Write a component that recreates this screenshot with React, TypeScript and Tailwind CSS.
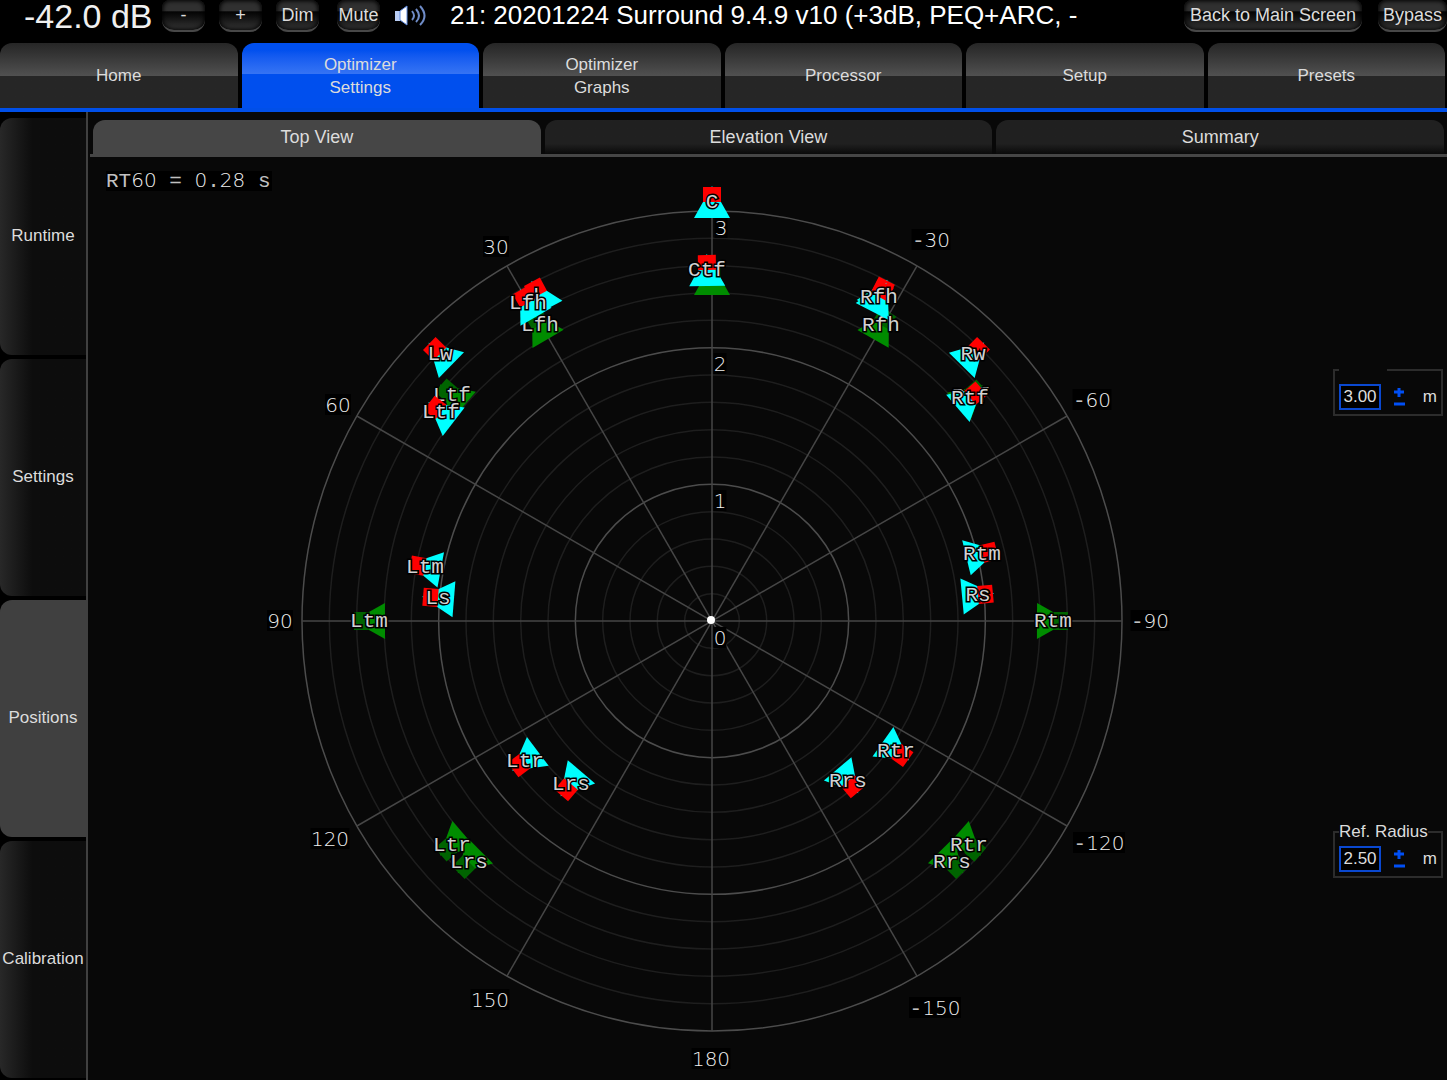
import { useState } from 'react';
import clsx from 'clsx';

const SANS = "font-['Liberation_Sans',Arial,sans-serif]";
const MONO = "font-['Liberation_Mono',monospace]";

const CENTER = { x: 712, y: 620 };
const RADIUS = 410;
const RINGS = 15;

type SpeakerPos = { name: string; x: number; y: number; hideLabel?: boolean };

const TARGETS: SpeakerPos[] = [
  { name: 'Ctf', x: 712, y: 279, hideLabel: true },
  { name: 'Lfh', x: 540, y: 325 },
  { name: 'Rfh', x: 881, y: 325 },
  { name: 'Ltf', x: 452, y: 395 },
  { name: 'Rtf', x: 971, y: 396 },
  { name: 'Ltm', x: 369, y: 621 },
  { name: 'Rtm', x: 1053, y: 621 },
  { name: 'Ltr', x: 452, y: 845 },
  { name: 'Rtr', x: 969, y: 845 },
  { name: 'Lrs', x: 469, y: 862 },
  { name: 'Rrs', x: 952, y: 862 },
];

const MEASURED: SpeakerPos[] = [
  { name: 'L', x: 539, y: 295 },
  { name: 'R', x: 880, y: 294, hideLabel: true },
  { name: 'C', x: 712, y: 202 },
  { name: 'Lw', x: 440, y: 354 },
  { name: 'Rw', x: 973, y: 354 },
  { name: 'Ls', x: 438, y: 598 },
  { name: 'Rs', x: 978, y: 595 },
  { name: 'Lrs', x: 571, y: 784 },
  { name: 'Rrs', x: 848, y: 781 },
  { name: 'Lfh', x: 528, y: 303 },
  { name: 'Ctf', x: 707, y: 270 },
  { name: 'Rfh', x: 879, y: 297 },
  { name: 'Ltf', x: 441, y: 412 },
  { name: 'Rtf', x: 970, y: 398 },
  { name: 'Ltm', x: 425, y: 567 },
  { name: 'Rtm', x: 982, y: 554 },
  { name: 'Ltr', x: 525, y: 761 },
  { name: 'Rtr', x: 896, y: 751 },
];

const SCALE_LABELS = [
  { text: '3', x: 721, y: 228 },
  { text: '2', x: 720, y: 364 },
  { text: '1', x: 720, y: 501 },
  { text: '0', x: 720, y: 638 },
  { text: '30', x: 496, y: 247 },
  { text: '-30', x: 931, y: 240 },
  { text: '60', x: 338, y: 405 },
  { text: '-60', x: 1092, y: 400 },
  { text: '90', x: 280, y: 621 },
  { text: '-90', x: 1150, y: 621 },
  { text: '120', x: 330, y: 839 },
  { text: '-120', x: 1099, y: 843 },
  { text: '150', x: 490, y: 1000 },
  { text: '-150', x: 935, y: 1008 },
  { text: '180', x: 711, y: 1059 },
];

// digits use a face with a plain zero, the rest stays monospaced
function Glyphs({ text }: { text: string }) {
  return (
    <>
      {text.split(/(\d+)/).filter(Boolean).map((part, i) =>
        /\d/.test(part) ? (
          <tspan key={i} fill="#f0f0f0" className="font-['DejaVu_Sans',sans-serif] text-[20px] font-extralight">{part}</tspan>
        ) : (
          <tspan key={i} fill="#c0c0c0">{part}</tspan>
        )
      )}
    </>
  );
}

function ScaleLabel({ text, x, y }: { text: string; x: number; y: number }) {
  const width = text.length * 13;
  return (
    <g>
      <rect x={x - width / 2} y={y - 11} width={width} height={21} fill="#000" />
      <text x={x} y={y + 7} textAnchor="middle" className={clsx(MONO, 'text-[21px]')}>
        <Glyphs text={text} />
      </text>
    </g>
  );
}

function SpeakerShape({ x, y, target }: SpeakerPos & { target?: boolean }) {
  const angle = (Math.atan2(x - CENTER.x, CENTER.y - y) * 180) / Math.PI;
  return (
    <g transform={`translate(${x} ${y}) rotate(${angle})`}>
      <polygon points="0,-16 18,16 -18,16" fill={target ? '#008c00' : '#00ffff'} />
      <rect x={-9} y={-15} width={18} height={15} fill={target ? '#006400' : '#ff0000'} />
    </g>
  );
}

function SpeakerLabel({ name, x, y, hideLabel }: SpeakerPos) {
  if (hideLabel) return null;
  return (
    <text
      x={x}
      y={y + 6}
      textAnchor="middle"
      fill="#d2d2d2"
      stroke="#000"
      strokeWidth={3}
      paintOrder="stroke"
      className={clsx(MONO, 'text-[21px]')}
    >
      {name}
    </text>
  );
}

function PolarPlot() {
  return (
    <svg viewBox="90 157 1243 923" className="min-h-0 min-w-0 flex-1" role="img" aria-label="Speaker positions, top view">
      <g fill="none" strokeWidth={1.5}>
        {Array.from({ length: RINGS }, (_, i) => i + 1).map((n) => (
          <circle
            key={n}
            cx={CENTER.x}
            cy={CENTER.y + 1}
            r={(RADIUS / RINGS) * n}
            stroke={n % 5 === 0 ? '#4c4c4c' : '#1e1e1e'}
          />
        ))}
        {[0, 30, 60, 90, 120, 150].map((deg) => (
          <line
            key={deg}
            x1={CENTER.x}
            x2={CENTER.x}
            y1={CENTER.y + 1 - RADIUS}
            y2={CENTER.y + 1 + RADIUS}
            stroke="#464646"
            transform={`rotate(${deg} ${CENTER.x} ${CENTER.y + 1})`}
          />
        ))}
      </g>
      {SCALE_LABELS.map((l) => (
        <ScaleLabel key={l.text} {...l} />
      ))}
      {TARGETS.map((s) => (
        <SpeakerShape key={s.name} {...s} target />
      ))}
      {TARGETS.map((s) => (
        <SpeakerLabel key={s.name} {...s} />
      ))}
      {MEASURED.map((s) => (
        <g key={s.name}>
          <SpeakerShape {...s} />
          <SpeakerLabel {...s} />
        </g>
      ))}
      <circle cx={711} cy={620} r={4} fill="#fff" />
      <rect x={106} y={171} width={166} height={20} fill="#000" />
      <text x={106} y={187} className={clsx(MONO, 'text-[21px] whitespace-pre')}>
        <Glyphs text="RT60 = 0.28 s" />
      </text>
    </svg>
  );
}

function Spinner({ legend, label, value }: { legend?: string; label: string; value: string }) {
  const [val, setVal] = useState(value);
  const step = (d: number) => setVal((parseFloat(val) + d).toFixed(2));

  return (
    <fieldset aria-label={label} className="h-14 w-[110px] border-2 border-[#2c2c2c] px-1">
      <legend className="h-5 min-w-12 text-[17px] leading-5 whitespace-nowrap">{legend}</legend>
      <div className="flex items-center pt-1">
        <input
          aria-label={label}
          value={val}
          onChange={(e) => setVal(e.target.value)}
          className="h-[26px] w-[42px] border-2 border-[#0a48d0] bg-black text-center text-[17px]"
        />
        <div className="mx-3 flex flex-col gap-[3px] text-[#004ff5]">
          <button aria-label={`Increase ${label}`} onClick={() => step(0.1)}>
            <svg viewBox="0 0 12 12" className="block size-3"><path d="M6 2v9M1 6h10" stroke="currentColor" strokeWidth="3" /></svg>
          </button>
          <button aria-label={`Decrease ${label}`} onClick={() => step(-0.1)}>
            <svg viewBox="0 0 12 8" className="block h-2 w-3"><path d="M1 3h11" stroke="currentColor" strokeWidth="3" /></svg>
          </button>
        </div>
        <span className="ml-auto text-[17px]">m</span>
      </div>
    </fieldset>
  );
}

function BarButton({ children, className }: { children: string; className?: string }) {
  return (
    <button
      className={clsx(
        'h-8 shrink-0 rounded-b-xl rounded-t-lg border-b-2 border-[#484848] bg-linear-to-b from-[#303030] from-35% via-[#050505] via-40% to-[#383838] text-lg leading-none whitespace-nowrap shadow-[inset_0_0_4px_1px_#000]',
        className
      )}
    >
      {children}
    </button>
  );
}

function VolumeIcon() {
  return (
    <svg viewBox="0 0 34 26" className="mr-3 ml-3.5 h-[26px] w-[34px] shrink-0" fill="none">
      <path d="M1 8h5v10H1z" fill="#b9cdf5" />
      <path d="M6 8l7-5v19l-7-5z" fill="#fff" stroke="#5f8be0" />
      <path d="M18 8q4 5 0 9M22 6q6 7 0 13M26 3q9 10 0 19" stroke="#6f8cc8" strokeWidth="2" />
    </svg>
  );
}

const TABS = ['Home', 'Optimizer Settings', 'Optimizer Graphs', 'Processor', 'Setup', 'Presets'];
const SECTIONS = ['Runtime', 'Settings', 'Positions', 'Calibration'];
const VIEWS = ['Top View', 'Elevation View', 'Summary'];

export default function App() {
  const [tab, setTab] = useState('Optimizer Settings');
  const [section, setSection] = useState('Positions');
  const [view, setView] = useState('Top View');

  return (
    <div className={clsx(SANS, 'flex h-screen flex-col overflow-hidden bg-black text-[#dcdcdc]')}>
      <header className="flex h-[43px] shrink-0 items-center pb-[11px] pl-6">
        <span className="w-[138px] shrink-0 text-[34px] leading-[30px] whitespace-nowrap text-[#f0f0f0]">-42.0 dB</span>
        <div className="flex gap-3.5">
          <BarButton className="w-[43px]">-</BarButton>
          <BarButton className="w-[43px]">+</BarButton>
          <BarButton className="w-[43px]">Dim</BarButton>
          <BarButton className="ml-1 w-[43px]">Mute</BarButton>
        </div>
        <VolumeIcon />
        <h1 className="ml-2.5 min-w-0 flex-1 overflow-hidden pb-0.5 text-[26px] leading-[30px] whitespace-nowrap text-white">
          21: 20201224 Surround 9.4.9 v10 (+3dB, PEQ+ARC, -
        </h1>
        <BarButton className="w-[178px]">Back to Main Screen</BarButton>
        <BarButton className="ml-4 w-[69px]">Bypass</BarButton>
      </header>

      <nav className="grid h-[69px] shrink-0 grid-cols-6 gap-1 border-b-4 border-[#004fe8] pr-0.5">
        {TABS.map((t) => (
          <button
            key={t}
            onClick={() => setTab(t)}
            className={clsx(
              'flex items-center justify-center rounded-t-xl bg-linear-to-b text-[17px] leading-[23px]',
              t === tab
                ? 'from-[#004fee] from-10% via-[#3674f4] via-48% to-[#004fee] to-48%'
                : 'from-[#262626] via-[#505050] via-50% to-[#262626] to-50%'
            )}
          >
            <span className={t.startsWith('Optimizer') ? 'w-20' : undefined}>{t}</span>
          </button>
        ))}
      </nav>

      <div className="flex min-h-0 flex-1">
        <nav className="flex w-[88px] shrink-0 flex-col gap-1 border-r-2 border-[#404040] pt-1.5 pb-0.5">
          {SECTIONS.map((s) => (
            <button
              key={s}
              onClick={() => setSection(s)}
              className={clsx(
                'flex flex-1 items-center justify-center rounded-l-xl pb-0.5 text-[17px]',
                s === section ? 'bg-[#404040]' : 'bg-linear-to-r from-[#282828] to-[#0d0d0d] to-38%'
              )}
            >
              {s}
            </button>
          ))}
        </nav>

        <main className="flex min-w-0 flex-1 flex-col bg-[#080808]">
          <div className="mt-2 ml-0.5 grid h-[37px] shrink-0 grid-cols-3 gap-1 border-b-3 border-[#464646] px-[3px]">
            {VIEWS.map((v) => (
              <button
                key={v}
                onClick={() => setView(v)}
                className={clsx(
                  'rounded-t-xl text-lg',
                  v === view ? 'bg-[#464646]' : 'bg-linear-to-b from-[#202020] from-70% to-[#0a0a0a]'
                )}
              >
                {v}
              </button>
            ))}
          </div>
          <div className="flex min-h-0 flex-1 pl-0.5">
            <PolarPlot />
            <aside className="flex shrink-0 flex-col justify-center gap-[406px] pr-1 pt-px">
              <Spinner label="Distance" value="3.00" />
              <Spinner legend="Ref. Radius" label="Ref. Radius" value="2.50" />
            </aside>
          </div>
        </main>
      </div>
    </div>
  );
}
